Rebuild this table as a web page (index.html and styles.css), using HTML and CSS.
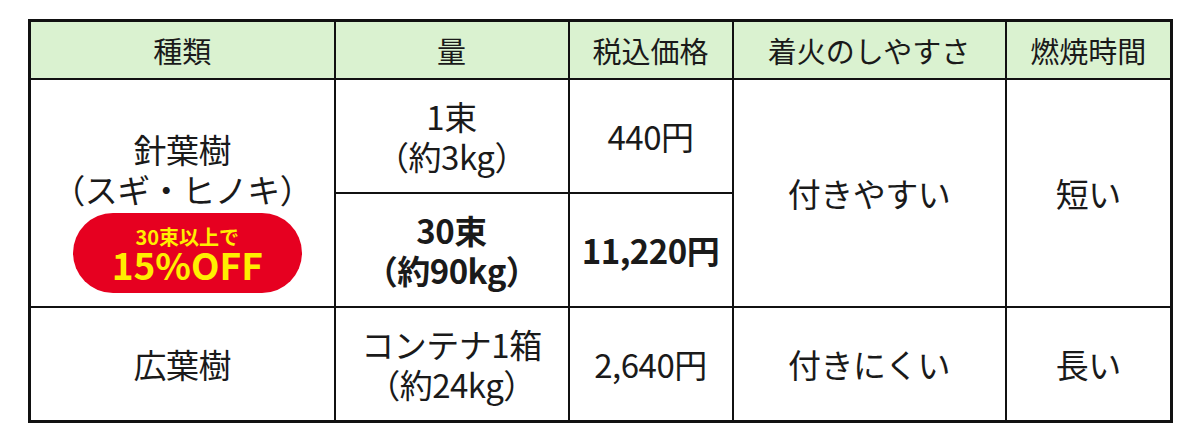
FILE: index.html
```html
<!DOCTYPE html>
<html lang="ja">
<head>
<meta charset="utf-8">
<link rel="stylesheet" href="styles.css">
</head>
<body>
<table class="price-table">
  <colgroup>
    <col class="c1"><col class="c2"><col class="c3"><col class="c4"><col class="c5">
  </colgroup>
  <thead>
    <tr class="head">
      <th>種類</th>
      <th>量</th>
      <th>税込価格</th>
      <th>着火のしやすさ</th>
      <th>燃焼時間</th>
    </tr>
  </thead>
  <tbody>
    <tr class="half">
      <td rowspan="2" class="kind">
        <div class="kind-name">針葉樹<br>（スギ・ヒノキ）</div>
        <div class="badge">
          <span class="badge-small">30束以上で</span>
          <span class="badge-big">15%OFF</span>
        </div>
      </td>
      <td>1束<br>（約3kg）</td>
      <td>440円</td>
      <td rowspan="2">付きやすい</td>
      <td rowspan="2">短い</td>
    </tr>
    <tr class="half">
      <td class="bold">30束<br>（約90kg）</td>
      <td class="bold">11,220円</td>
    </tr>
    <tr class="full">
      <td>広葉樹</td>
      <td>コンテナ1箱<br>（約24kg）</td>
      <td>2,640円</td>
      <td>付きにくい</td>
      <td>長い</td>
    </tr>
  </tbody>
</table>
</body>
</html>
```

FILE: styles.css
```css
html, body {
  margin: 0;
  padding: 0;
  background: #ffffff;
}
body {
  padding: 19px 0 0 28px;
  font-family: "Noto Sans CJK JP", "Noto Sans", sans-serif;
  color: #1a1a1a;
}
.price-table {
  border-collapse: collapse;
  table-layout: fixed;
  width: 1142px;
  border: 3px solid #111;
}
.c1 { width: 305px; }
.c2 { width: 234px; }
.c3 { width: 164px; }
.c4 { width: 273px; }
.c5 { width: 166px; }
.price-table th,
.price-table td {
  border: 2px solid #111;
  text-align: center;
  vertical-align: middle;
  padding: 0;
}
.head th {
  height: 56px;
  background: #daf2d0;
  font-weight: normal;
  font-size: 29px;
  line-height: 36px;
}
.price-table td {
  font-size: 33px;
  line-height: 40px;
  letter-spacing: -0.5px;
}
.half td { height: 112px; }
.full td { height: 112px; }
.bold { font-weight: bold; }
.price-table td.kind {
  vertical-align: top;
  padding-top: 49px;
}
.kind-name {
  line-height: 40px;
}
.badge {
  margin: 4px auto 0;
  width: 229px;
  height: 80px;
  border-radius: 40px;
  background: #e60020;
  color: #ffee00;
  font-weight: bold;
  letter-spacing: 0;
  display: flex;
  flex-direction: column;
  align-items: center;
  justify-content: center;
  position: relative;
  left: 5px;
}
.badge-small {
  font-size: 20px;
  line-height: 24px;
}
.badge-big {
  font-size: 37px;
  line-height: 36px;
  margin-top: -3px;
}
```
